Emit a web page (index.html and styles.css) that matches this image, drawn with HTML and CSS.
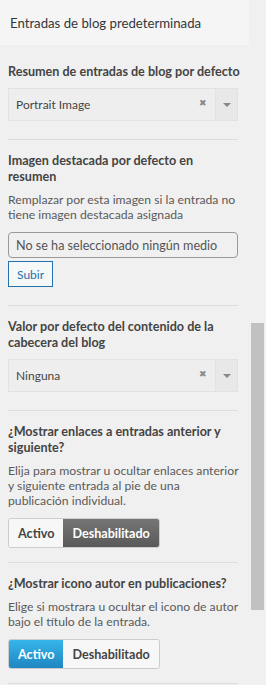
FILE: index.html
```html
<!DOCTYPE html>
<html lang="es">
<head>
  <meta charset="UTF-8">
  <title>Entradas de blog predeterminada</title>
  <link rel="stylesheet" href="styles.css">
</head>
<body>
  <div class="section-title">Entradas de blog predeterminada</div>

  <div class="controls">
    <div class="control first">
      <div class="label">Resumen de entradas de blog por defecto</div>
      <div class="select">
        <span class="select-value">Portrait Image</span>
        <span class="select-clear">&#x2716;</span>
        <span class="select-arrow"><i></i></span>
      </div>
    </div>

    <div class="control">
      <div class="label">Imagen destacada por defecto en resumen</div>
      <div class="desc">Remplazar por esta imagen si la entrada no tiene imagen destacada asignada</div>
      <div class="media-input">No se ha seleccionado ningún medio</div>
      <button class="upload">Subir</button>
    </div>

    <div class="control">
      <div class="label">Valor por defecto del contenido de la cabecera del blog</div>
      <div class="select">
        <span class="select-value">Ninguna</span>
        <span class="select-clear">&#x2716;</span>
        <span class="select-arrow"><i></i></span>
      </div>
    </div>

    <div class="control tight">
      <div class="label">¿Mostrar enlaces a entradas anterior y siguiente?</div>
      <div class="desc">Elija para mostrar u ocultar enlaces anterior y siguiente entrada al pie de una publicación individual.</div>
      <div class="switch">
        <span class="opt">Activo</span>
        <span class="opt off-on">Deshabilitado</span>
      </div>
    </div>

    <div class="control tight last">
      <div class="label">¿Mostrar icono autor en publicaciones?</div>
      <div class="desc">Elige si mostrara u ocultar el icono de autor bajo el título de la entrada.</div>
      <div class="switch">
        <span class="opt on">Activo</span>
        <span class="opt">Deshabilitado</span>
      </div>
    </div>
  </div>

  <div class="scroll-thumb"></div>
</body>
</html>
```

FILE: styles.css
```css
body {
  margin: 0;
  background: #f0f0f0;
  font-family: Lato, "Noto Sans", sans-serif;
  color: #444;
  width: 266px;
  height: 685px;
  overflow: hidden;
  position: relative;
}
.section-title {
  width: 239px;
  height: 45px;
  padding-left: 10px;
  background: #f5f5f5;
  display: flex;
  align-items: center;
  font-size: 13.2px;
  color: #32373c;
}
.controls {
  width: 230px;
  margin-left: 8px;
}
.control {
  border-top: 1px solid #dddddd;
  padding: 13px 0 18px;
}
.control.first {
  border-top: none;
  padding-top: 19px;
}
.control.tight {
  padding-bottom: 14px;
}
.control.last {
  border-bottom: 1px solid #dddddd;
}
.label {
  font-size: 12.6px;
  font-weight: 700;
  line-height: 16px;
  color: #444;
  margin-right: -4px;
}
.desc {
  font-size: 12.2px;
  line-height: 15px;
  color: #5a5a5a;
  margin-top: 7px;
  margin-right: -4px;
}
.select {
  margin-top: 8px;
  height: 31px;
  border: 1px solid #e2e2e2;
  background: #eeeeee;
  display: flex;
  align-items: center;
  font-size: 12px;
  color: #444;
}
.select-value {
  flex: 1;
  padding-left: 7px;
}
.select-clear {
  font-size: 9px;
  color: #888;
  margin-right: 8px;
  margin-top: -4px;
}
.select-arrow {
  width: 21px;
  height: 100%;
  border-left: 1px solid #e2e2e2;
  background: #e8e8e8;
  display: flex;
  align-items: center;
  justify-content: center;
}
.select-arrow i {
  border-left: 4px solid transparent;
  border-right: 4px solid transparent;
  border-top: 4px solid #888;
}
.media-input {
  margin-top: 10px;
  height: 24px;
  border: 1px solid #999;
  border-radius: 4px;
  padding-left: 7px;
  display: flex;
  align-items: center;
  font-size: 12.6px;
  color: #555;
  white-space: nowrap;
}
.upload {
  display: block;
  margin-top: 3px;
  height: 26px;
  padding: 0 8px;
  border: 1px solid #2271b1;
  background: #f6f7f7;
  color: #2271b1;
  font-family: inherit;
  font-size: 12px;
  border-radius: 0;
}
.switch {
  margin-top: 10px;
  display: inline-flex;
  height: 28px;
  border: 1px solid #cccccc;
  border-radius: 3px;
  overflow: hidden;
  font-size: 12.6px;
  font-weight: 700;
}
.opt {
  display: flex;
  align-items: center;
  padding: 0 9px;
  background: #f7f7f7;
  color: #444;
}
.opt.off-on {
  background: linear-gradient(#767676, #595959);
  color: #fff;
}
.opt.on {
  background: linear-gradient(#35b6ea, #1f86c0);
  color: #fff;
}
.scroll-thumb {
  position: absolute;
  left: 251px;
  top: 323px;
  width: 13px;
  height: 287px;
  background: #c1c1c1;
}
```
